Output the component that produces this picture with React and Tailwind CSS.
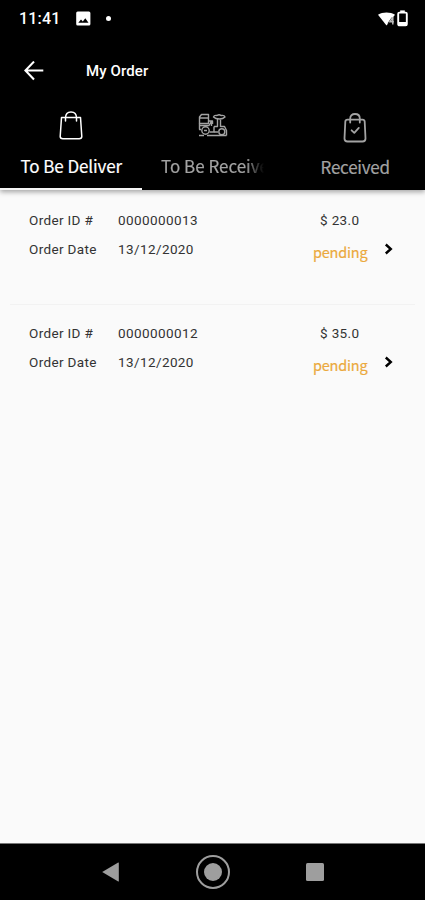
const tabFont = "font-['Noto_Sans_CJK_SC','Noto_Sans',sans-serif]";

const orders = [
  { id: '0000000013', date: '13/12/2020', total: '$ 23.0', status: 'pending' },
  { id: '0000000012', date: '13/12/2020', total: '$ 35.0', status: 'pending' },
];

function StatusBar() {
  return (
    <div className="flex h-[37px] items-center pl-[19px] pr-[17px] text-white">
      <span className="w-[57px] text-[16px] font-medium leading-none tracking-[0.2px]">11:41</span>
      <svg width="15" height="15" viewBox="0 0 15 15" fill="none">
        <rect x="0.2" y="0.5" width="14.2" height="14" rx="1.5" fill="#fff" />
        <path d="M2.3 11.8 5 8.4l1.8 2.1 2.5-3.2 3.2 4.5z" fill="#000" />
      </svg>
      <span className="ml-[15px] size-[5px] rounded-full bg-white" />
      <div className="ml-auto flex items-center gap-[2px]">
        <svg width="17" height="16" viewBox="0 0 17 16">
          <path d="M0 3.7C4.6 .8 12.4 .8 17 3.7L8.5 14.5z" fill="#fff" />
          <path d="M14.5 7 11.5 11.5h3" stroke="#000" strokeWidth="2.2" fill="none" />
          <path d="M14.8 6.5 11.9 10.8h4M14.8 6v7.5" stroke="#bbb" strokeWidth="1.5" fill="none" />
        </svg>
        <svg width="11" height="17" viewBox="0 0 11 17" fill="none">
          <path d="M3.2 .4h4.6v2.5H3.2z" fill="#fff" />
          <rect x="1.2" y="2.6" width="8.6" height="12.8" rx="1.2" stroke="#fff" strokeWidth="1.9" />
          <path d="M1 12h9v4H1z" fill="#fff" />
        </svg>
      </div>
    </div>
  );
}

function AppBar() {
  return (
    <div className="flex h-[67px] items-center pl-[24px] text-white">
      <svg width="20" height="20" viewBox="0 0 20 20" fill="none" stroke="#fff" strokeWidth="2.1">
        <path d="M19.3 9.500H1.500M10 .6 1.400 9.500 10 18.400" />
      </svg>
      <h1 className="ml-[42px] mt-[2px] text-[15px] font-medium leading-none tracking-[0.1px]">My Order</h1>
    </div>
  );
}

function BagIcon() {
  return (
    <svg className="ml-px mt-[7px]" width="24" height="30" viewBox="0 0 24 30" fill="none" stroke="#fff" strokeWidth="1.5" strokeLinecap="round" strokeLinejoin="round">
      <path d="M2.5 6.5h19l1.3 19Q22.800 27.700 20.200 27.700H3.800Q1.200 27.700 1.200 25.500z" />
      <path d="M6.500 10V7C6.500 3 8.500 .9 12 .9s5.500 2.100 5.500 6.100v3" />
    </svg>
  );
}

function TruckIcon() {
  return (
    <svg className="ml-[2px] mt-[9px]" width="30" height="24" viewBox="0 0 30 24" fill="none" stroke="#a3a3a3" strokeWidth="1.4" strokeLinejoin="round">
      <path d="M1.5 4 3.5 1.5h7v9h-9zM1.5 5h9" />
      <path d="M1.5 10.5v6M1.5 12.5h9.500l2.500-4.500v5M11 8h3.500v3M1 16.500h2" />
      <circle cx="7.5" cy="17.5" r="3.7" />
      <path d="M6 17.500h3M1 22.500h5M9 22.500h19.500M11.500 19h4.500v-5.500M16 13.500h3.500v-8M22.500 6.500v7.500" />
      <path d="M15.500 4c.5-1.500 2-1.800 3.500-1.500 1.200-.8 3-.8 4 0 2-.4 3.500 0 4 1.500-1.500 1.500-3 2-5.500 2s-4.500-.5-6-2zM22.500 13.500h4l2 4v5M16 19h4" />
      <circle cx="23.8" cy="18.8" r="3" />
    </svg>
  );
}

function CheckBagIcon() {
  return (
    <svg className="ml-[2px] mt-[9px]" width="24" height="31" viewBox="0 0 24 31" fill="none" stroke="#a3a3a3" strokeWidth="1.8" strokeLinecap="round" strokeLinejoin="round">
      <path d="M4.5 6.7h15q2 0 2.2 2L22.5 25.500q0 3-3 3H4.500q-3 0-3-3L2.300 8.700q.2-2 2.200-2z" />
      <path d="M7.200 9.500V5.500c0-3 1.800-4.500 4.800-4.500s4.800 1.500 4.800 4.500v4M8.600 17.300l2.700 2.600 4.500-5" />
    </svg>
  );
}

function Tabs() {
  return (
    <div className={`grid h-[86px] grid-cols-3 ${tabFont} text-[17px] leading-[26px]`}>
      <button className="flex flex-col items-center border-b-2 border-[#f5f5f5] text-white">
        <BagIcon />
        <span className="ml-px mt-[12px] whitespace-nowrap tracking-[-0.1px] [-webkit-text-stroke:0.2px_#fff]">To Be Deliver</span>
      </button>
      <button className="flex flex-col items-center text-[#a3a3a3]">
        <TruckIcon />
        <span className="mt-[16px] w-[103px] overflow-hidden whitespace-nowrap text-left [-webkit-text-stroke:0.2px_#a3a3a3] [mask-image:linear-gradient(to_right,black_82%,transparent_100%)]">To Be Receive</span>
      </button>
      <button className="flex flex-col items-center text-[#a3a3a3]">
        <CheckBagIcon />
        <span className="ml-[2px] mt-[10px] whitespace-nowrap tracking-[-0.25px] [-webkit-text-stroke:0.2px_#a3a3a3]">Received</span>
      </button>
    </div>
  );
}

function OrderRow({ order }) {
  return (
    <li className="grid h-[115px] grid-cols-[89px_195px_62px_1fr] grid-rows-[29px_29px] pl-[19px] pt-[16px] text-[13.5px] leading-[29px] tracking-[0.35px] text-[#333] last:pt-[14px]">
      <span>Order ID #</span>
      <span className="tracking-[0.4px]">{order.id}</span>
      <span className="pl-[7px]">{order.total}</span>
      <span />
      <span>Order Date</span>
      <span className="tracking-[0.4px]">{order.date}</span>
      <span className={`${tabFont} pt-[2px] text-[14.5px] tracking-[-0.2px] text-[#eba93d] [-webkit-text-stroke:0.2px]`}>{order.status}</span>
      <svg className="ml-[9px] mt-[8px]" width="10" height="12" viewBox="0 0 10 12" fill="none" stroke="#000" strokeWidth="2.4">
        <path d="M1.8 1.5 6.8 6l-5 4.5" />
      </svg>
    </li>
  );
}

function NavBar() {
  return (
    <nav className="flex h-[57px] items-center border-t border-[#777] bg-black pl-[102px]">
      <svg width="18" height="20" viewBox="0 0 18 20" fill="#9e9e9e">
        <path d="M.2 10 16.2 .5q.6-.2.6.5v18q0 .7-.6.5z" />
      </svg>
      <span className="ml-[76px] flex size-[34px] items-center justify-center rounded-full border-2 border-[#9e9e9e]">
        <span className="size-[18px] rounded-full bg-[#9e9e9e]" />
      </span>
      <span className="ml-[76px] size-[18px] rounded-[1.5px] bg-[#9e9e9e]" />
    </nav>
  );
}

export default function App() {
  return (
    <div className="flex h-[900px] w-[425px] flex-col overflow-hidden bg-[#fafafa] font-[Roboto,sans-serif]">
      <header className="relative bg-black shadow-[0_2px_5px_rgba(0,0,0,0.35)]">
        <StatusBar />
        <AppBar />
        <Tabs />
      </header>
      <main className="flex-1">
        <ul className="mx-[10px] divide-y divide-[#f2f2f2]">
          {orders.map((order) => (
            <OrderRow key={order.id} order={order} />
          ))}
        </ul>
      </main>
      <NavBar />
    </div>
  );
}
